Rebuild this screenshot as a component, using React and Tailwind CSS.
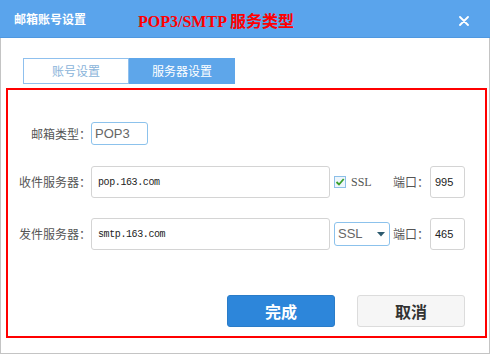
import React from "react";

const cjk = { fontFamily: '"Noto Sans CJK SC", "Noto Sans", sans-serif' };

export default function App() {
  return (
    <div className="w-[493px] h-[358px] bg-white" style={cjk}>
      <div className="w-[490px] h-[354px] flex flex-col">
        {/* header */}
        <div className="h-[38px] bg-[#5aa4ec] border-b border-[#4f98e0] flex items-center relative shrink-0">
          <span className="ml-[14px] text-[12px] font-bold text-white leading-none">邮箱账号设置</span>
          <span
            className="ml-[52px] text-[16px] font-bold text-[#ff0000] leading-none mt-[6px]"
            style={{ fontFamily: '"Liberation Serif", "Noto Sans CJK SC", serif' }}
          >
            POP3/SMTP 服务类型
          </span>
          <svg className="absolute left-[459px] top-[16px]" width="10" height="10" viewBox="0 0 10 10">
            <path d="M1 1 L9 9 M9 1 L1 9" stroke="white" strokeWidth="1.8" strokeLinecap="round" />
          </svg>
        </div>
        {/* body */}
        <div className="flex-1 border-l border-r border-b border-[#c4c4c4] flex flex-col">
          {/* tabs */}
          <div className="flex ml-[22px] mt-[20px] h-[26px]">
            <div className="w-[106px] border border-[#8fc0ee] bg-white flex items-center justify-center text-[12px] text-[#8ab4da]">
              账号设置
            </div>
            <div className="w-[106px] bg-[#5ea6ea] flex items-center justify-center text-[12px] text-white">
              服务器设置
            </div>
          </div>
          {/* red box */}
          <div className="ml-[5px] mt-[4px] w-[481px] h-[250px] border-2 border-[#ff0000] flex flex-col">
            {/* row 1 */}
            <div className="flex items-center mt-[32px] h-[23px]">
              <div className="w-[83px] text-right text-[12px] text-[#555]">邮箱类型：</div>
              <div className="w-[57px] h-[23px] border border-[#8cc2ec] rounded-[3px] flex items-center pl-[3px] text-[13px] text-[#666]" style={{ fontFamily: '"Liberation Sans", Arial, sans-serif' }}>
                POP3
              </div>
            </div>
            {/* row 2 */}
            <div className="flex items-center mt-[21px] h-[32px]">
              <div className="w-[83px] text-right text-[12px] text-[#555]">收件服务器：</div>
              <div
                className="w-[239px] h-[32px] border border-[#d4d4d4] rounded-[3px] flex items-center pl-[6px] text-[10px] tracking-[-0.4px] text-[#222]"
                style={{ fontFamily: '"Liberation Mono", monospace' }}
              >
                pop.163.com
              </div>
              <div className="w-[59px] ml-[4px] flex items-center">
                <div className="w-[12px] h-[12px] border border-[#8cbfe8] bg-[#eef6fc] flex items-center justify-center">
                  <svg width="10" height="10" viewBox="0 0 10 10">
                    <path d="M1.5 5 L4 7.5 L8.7 2" stroke="#3aa02a" strokeWidth="1.8" fill="none" />
                  </svg>
                </div>
                <span className="ml-[5px] text-[12px] text-[#555]" style={{ fontFamily: '"Liberation Serif", serif' }}>SSL</span>
              </div>
              <div className="w-[37px] text-[12px] text-[#555]">端口：</div>
              <div className="w-[35px] h-[32px] border border-[#d4d4d4] rounded-[3px] flex items-center pl-[4px] text-[11px] text-[#222]" style={{ fontFamily: '"Liberation Sans", Arial, sans-serif' }}>
                995
              </div>
            </div>
            {/* row 3 */}
            <div className="flex items-center mt-[20px] h-[32px]">
              <div className="w-[83px] text-right text-[12px] text-[#555]">发件服务器：</div>
              <div
                className="w-[239px] h-[32px] border border-[#d4d4d4] rounded-[3px] flex items-center pl-[6px] text-[10px] tracking-[-0.4px] text-[#222]"
                style={{ fontFamily: '"Liberation Mono", monospace' }}
              >
                smtp.163.com
              </div>
              <div className="w-[56px] h-[24px] ml-[4px] border border-[#8cc2ec] rounded-[3px] flex items-center justify-between pl-[3px] pr-[4px]">
                <span className="text-[13px] text-[#666]" style={{ fontFamily: '"Liberation Sans", Arial, sans-serif' }}>SSL</span>
                <svg width="8" height="5" viewBox="0 0 8 5">
                  <path d="M0 0 L8 0 L4 4.5 Z" fill="#2c5a6e" />
                </svg>
              </div>
              <div className="w-[37px] ml-[3px] text-[12px] text-[#555]">端口：</div>
              <div className="w-[35px] h-[32px] border border-[#d4d4d4] rounded-[3px] flex items-center pl-[4px] text-[11px] text-[#222]" style={{ fontFamily: '"Liberation Sans", Arial, sans-serif' }}>
                465
              </div>
            </div>
            {/* buttons */}
            <div className="flex mt-[45px] ml-[219px] gap-[22px]">
              <div className="w-[108px] h-[32px] bg-[#2d86da] border border-[#2a7cc8] rounded-[3px] flex items-center justify-center text-[16px] font-bold text-white">
                完成
              </div>
              <div className="w-[108px] h-[32px] bg-[#f6f6f6] border border-[#dcdcdc] rounded-[3px] flex items-center justify-center text-[16px] font-bold text-[#333]">
                取消
              </div>
            </div>
          </div>
        </div>
      </div>
    </div>
  );
}
